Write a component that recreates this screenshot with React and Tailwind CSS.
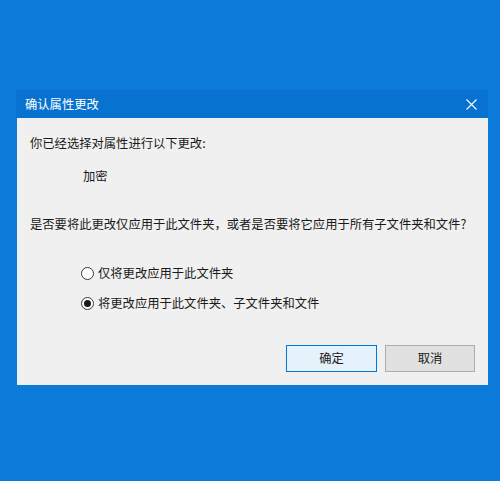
import React from "react";

const font = { fontFamily: '"Noto Sans CJK SC", "Microsoft YaHei", sans-serif' };

function Radio({ checked, label }) {
  return (
    <div className="flex items-center h-4">
      <span className="ml-[51px] w-[13px] h-[13px] rounded-full border border-[#3a3a3a] bg-white flex items-center justify-center">
        {checked && <span className="w-[7px] h-[7px] rounded-full bg-[#1a1a1a]" />}
      </span>
      <span className="ml-[4px] text-[12.3px] leading-4 text-[#1a1a1a]">{label}</span>
    </div>
  );
}

export default function App() {
  return (
    <div className="w-[500px] h-[481px] bg-[#0c7ad8] pt-[90px] pl-[16px]" style={font}>
      <div className="w-[472px] flex flex-col">
        <div className="h-[28px] bg-[#0872d1] flex items-center justify-between pl-[9px] pr-[10px]">
          <span className="text-white text-[12.3px] leading-4">确认属性更改</span>
          <svg width="11" height="11" viewBox="0 0 11 11" className="mr-[1px]">
            <path d="M0.5 0.5 L10.5 10.5 M10.5 0.5 L0.5 10.5" stroke="#fff" strokeWidth="1.1" />
          </svg>
        </div>
        <div className="ml-[1px] bg-[#f0f0f0] pl-[13px] pr-[13px] pt-[17px] pb-[13px] flex flex-col text-[#1a1a1a]">
          <div className="text-[12.3px] leading-4">你已经选择对属性进行以下更改:</div>
          <div className="text-[12.3px] leading-4 mt-[17px] pl-[53px]">加密</div>
          <div className="text-[12.3px] leading-4 mt-[32px] whitespace-nowrap">是否要将此更改仅应用于此文件夹，或者是否要将它应用于所有子文件夹和文件?</div>
          <div className="mt-[33px]">
            <Radio label="仅将更改应用于此文件夹" />
          </div>
          <div className="mt-[14px]">
            <Radio checked label="将更改应用于此文件夹、子文件夹和文件" />
          </div>
          <div className="mt-[34px] flex justify-end gap-[8px]">
            <button className="w-[91px] h-[27px] bg-[#e5f1fb] border border-[#0078d7] text-[12.3px] text-[#1a1a1a]">确定</button>
            <button className="w-[90px] h-[27px] bg-[#e1e1e1] border border-[#adadad] text-[12.3px] text-[#1a1a1a]">取消</button>
          </div>
        </div>
      </div>
    </div>
  );
}
